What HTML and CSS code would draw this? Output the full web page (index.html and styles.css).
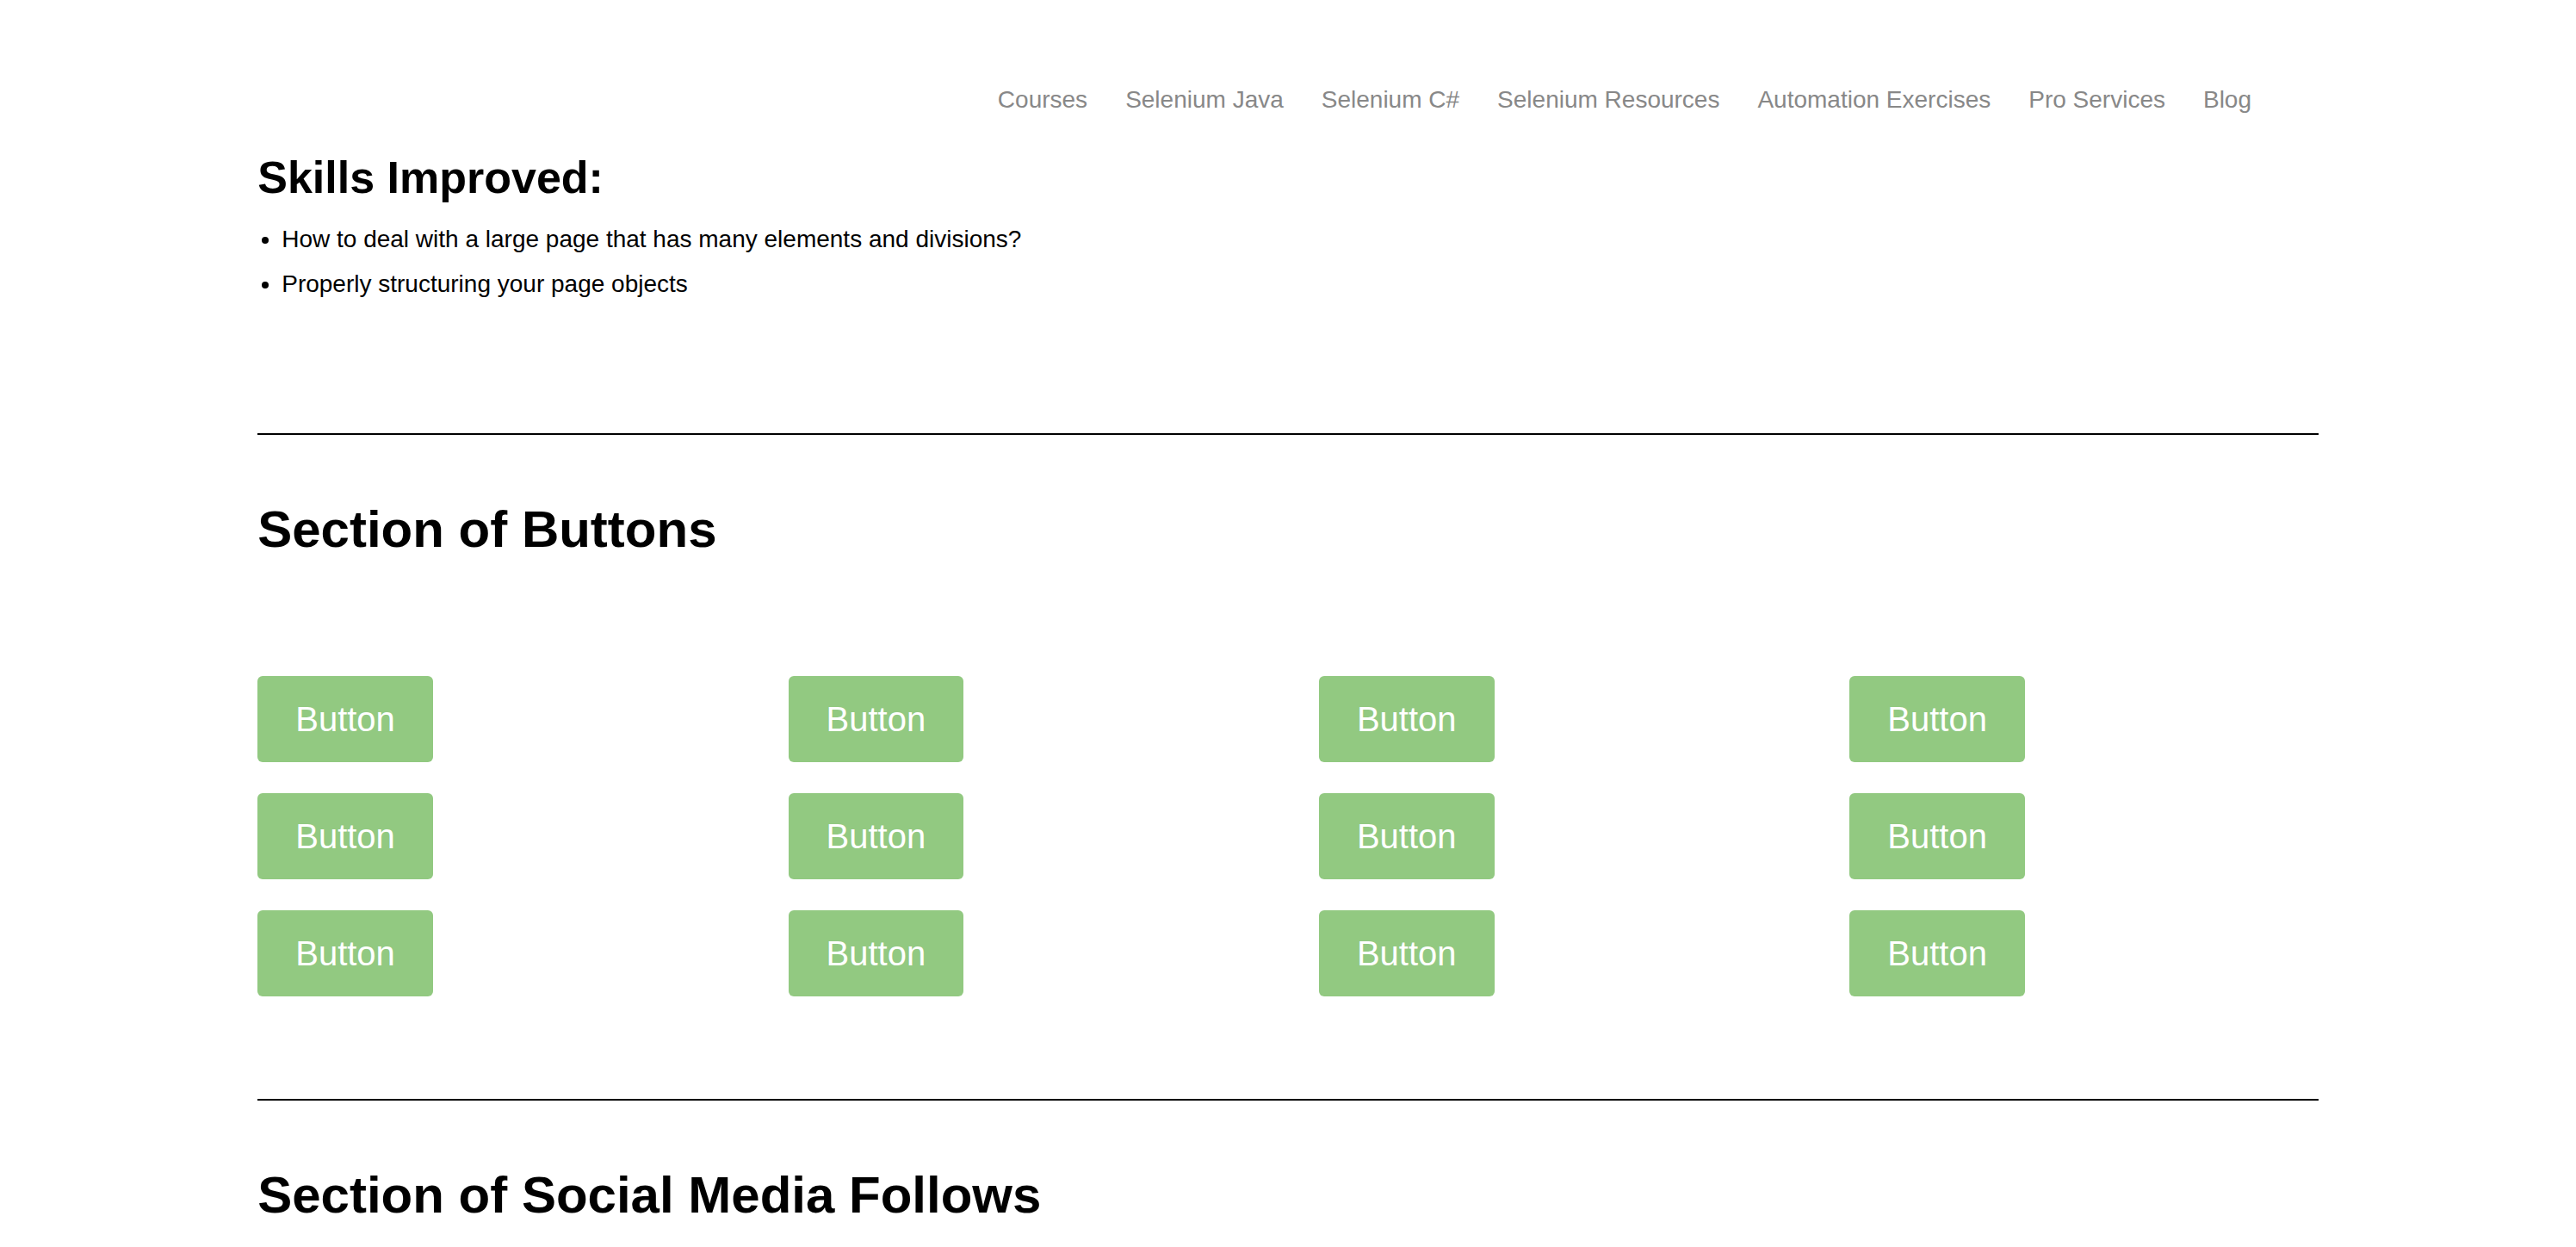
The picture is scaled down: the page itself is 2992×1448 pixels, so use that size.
FILE: index.html
```html
<!DOCTYPE html>
<html lang="en">
<head>
<meta charset="utf-8">
<title>Complicated Page</title>
<link rel="stylesheet" href="styles.css">
</head>
<body>
<header class="header">
  <nav class="nav">
    <a href="#">Courses</a>
    <a href="#">Selenium Java</a>
    <a href="#">Selenium C#</a>
    <a href="#">Selenium Resources</a>
    <a href="#">Automation Exercises</a>
    <a href="#">Pro Services</a>
    <a href="#">Blog</a>
  </nav>
</header>
<main class="content">
  <section class="skills">
    <h2 class="skills-title">Skills Improved:</h2>
    <ul class="skills-list">
      <li>How to deal with a large page that has many elements and divisions?</li>
      <li>Properly structuring your page objects</li>
    </ul>
  </section>
  <section class="section">
    <h1 class="section-title">Section of Buttons</h1>
    <div class="button-grid">
      <div><button class="button" type="button">Button</button></div>
      <div><button class="button" type="button">Button</button></div>
      <div><button class="button" type="button">Button</button></div>
      <div><button class="button" type="button">Button</button></div>
      <div><button class="button" type="button">Button</button></div>
      <div><button class="button" type="button">Button</button></div>
      <div><button class="button" type="button">Button</button></div>
      <div><button class="button" type="button">Button</button></div>
      <div><button class="button" type="button">Button</button></div>
      <div><button class="button" type="button">Button</button></div>
      <div><button class="button" type="button">Button</button></div>
      <div><button class="button" type="button">Button</button></div>
    </div>
  </section>
  <section class="section">
    <h1 class="section-title">Section of Social Media Follows</h1>
  </section>
</main>
</body>
</html>
```
FILE: styles.css
```css
* {
  box-sizing: border-box;
}

body {
  margin: 0;
  background: #fff;
  color: #000;
  font-family: "Liberation Sans", Arial, sans-serif;
  font-size: 28px;
  line-height: 52px;
}

h1, h2, ul {
  margin: 0;
  padding: 0;
}

.header {
  padding: 90px 377px 0 0;
}

.nav {
  display: flex;
  justify-content: flex-end;
  gap: 44px;
}

.nav a {
  color: #888;
  text-decoration: none;
}

.content {
  width: 80%;
  margin: 0 auto;
}

.skills {
  padding: 32px 0 147px;
}

.skills-title {
  font-size: 52px;
  line-height: 64px;
  margin-bottom: 14px;
}

.skills-list {
  padding-left: 28px;
}

.section {
  border-top: 2px solid #000;
  padding: 72px 0 119px;
}

.section:last-child {
  padding-bottom: 0;
}

.section-title {
  font-size: 60px;
  line-height: 76px;
}

.button-grid {
  display: grid;
  grid-template-columns: repeat(4, 1fr);
  gap: 36px 3%;
  margin-top: 132px;
}

.button {
  display: block;
  height: 100px;
  padding: 0 44px;
  border: 0;
  border-radius: 6px;
  background: #92c981;
  color: #fff;
  font-family: inherit;
  font-size: 40px;
}
```
